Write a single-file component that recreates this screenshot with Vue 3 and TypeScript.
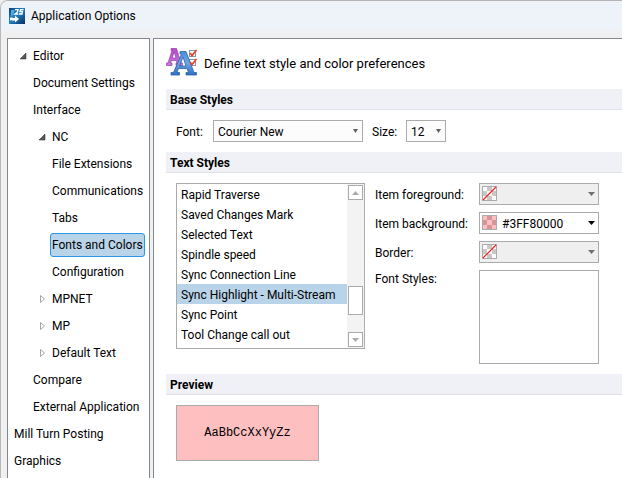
<script setup lang="ts">
import { ref } from 'vue'

interface TreeNode {
  label: string
  level: number
  state?: 'open' | 'closed'
}

const nodes: TreeNode[] = [
  { label: 'Editor', level: 1, state: 'open' },
  { label: 'Document Settings', level: 1 },
  { label: 'Interface', level: 1 },
  { label: 'NC', level: 2, state: 'open' },
  { label: 'File Extensions', level: 2 },
  { label: 'Communications', level: 2 },
  { label: 'Tabs', level: 2 },
  { label: 'Fonts and Colors', level: 2 },
  { label: 'Configuration', level: 2 },
  { label: 'MPNET', level: 2, state: 'closed' },
  { label: 'MP', level: 2, state: 'closed' },
  { label: 'Default Text', level: 2, state: 'closed' },
  { label: 'Compare', level: 1 },
  { label: 'External Application', level: 1 },
  { label: 'Mill Turn Posting', level: 0 },
  { label: 'Graphics', level: 0 },
]

const styleNames: string[] = [
  'Rapid Traverse',
  'Saved Changes Mark',
  'Selected Text',
  'Spindle speed',
  'Sync Connection Line',
  'Sync Highlight - Multi-Stream',
  'Sync Point',
  'Tool Change call out',
]

interface ColorField {
  id: string
  label: string
  value: string
}

const colorFields: ColorField[] = [
  { id: 'foreground', label: 'Item foreground:', value: '' },
  { id: 'background', label: 'Item background:', value: '#3FF80000' },
  { id: 'border', label: 'Border:', value: '' },
]

const page = ref('Fonts and Colors')
const textStyle = ref('Sync Highlight - Multi-Stream')
</script>

<template>
  <div class="window">
    <header class="titlebar">
      <svg class="app-icon" viewBox="0 0 16 16" aria-hidden="true">
        <defs>
          <linearGradient id="appBlue" x1="0" y1="0" x2="1" y2="1">
            <stop offset="0" stop-color="#12406f" />
            <stop offset="0.45" stop-color="#2384cc" />
            <stop offset="1" stop-color="#0a2c58" />
          </linearGradient>
        </defs>
        <rect width="16" height="16" fill="url(#appBlue)" />
        <path d="M2 2h4L4 7 2 9z" fill="#4ea9e2" />
        <path d="M6 1.700h3L8.500 4 6 6h3.300M14.500 1.700H11.500L11 3.500h2.500L13 6h-3" fill="none" stroke="#fff" stroke-width="1.300" />
        <path d="M1 9.500C3 9 4 10.500 6 10V7.500L10 11l-4 3.500V12.500C4 13 3 12 1 12.500z" fill="#fff" />
      </svg>
      <span>Application Options</span>
    </header>

    <div class="body">
      <nav class="tree" aria-label="Options">
        <ul>
          <li v-for="node in nodes" :key="node.label" :class="['node', `level-${node.level}`]">
            <svg v-if="node.state === 'open'" class="arrow" viewBox="0 0 8 8" aria-hidden="true">
              <path d="M7 1v6H1z" fill="#595959" stroke="#262626" stroke-width="0.500" />
            </svg>
            <svg v-else-if="node.state === 'closed'" class="arrow" viewBox="0 0 8 8" aria-hidden="true">
              <path d="M2.500 0.500v7L6.500 4z" fill="#fff" stroke="#a6a6a6" />
            </svg>
            <span v-else class="arrow"></span>
            <button
              type="button"
              :class="['node-label', { selected: node.label === page }]"
              @click="page = node.label"
            >{{ node.label }}</button>
          </li>
        </ul>
      </nav>

      <main class="content">
        <div class="intro">
          <svg class="intro-icon" viewBox="0 0 32 32" aria-hidden="true">
            <defs>
              <linearGradient id="letterBlue" x1="0" y1="0" x2="0" y2="1">
                <stop offset="0" stop-color="#4f8fd6" />
                <stop offset="0.5" stop-color="#6aa6e6" />
                <stop offset="1" stop-color="#2f6fc0" />
              </linearGradient>
              <linearGradient id="letterPurple" x1="0" y1="0" x2="0" y2="1">
                <stop offset="0" stop-color="#b04cc4" />
                <stop offset="1" stop-color="#cc78dc" />
              </linearGradient>
            </defs>
            <path
              d="M5 0.500h5.500L15 15h1.500v2.500H10V15h1l-0.600-2.500H5.500L4.500 15H6v2.500H0.500V15H2L6 2.500H5zM8.200 4 6.200 10H10z"
              fill="url(#letterPurple)"
              fill-rule="evenodd"
              stroke="#9a3bb0"
              stroke-width="0.700"
            />
            <g fill="#fff" stroke="#8496b4">
              <rect x="23.500" y="2.500" width="6" height="6" />
              <rect x="23.500" y="11.500" width="6" height="6" />
            </g>
            <path
              d="M14 3.500h6L28 24.500h2.500v2.500H20v-2.500h2.500L21 20.500h-8.500L11 24.500h2.500v2.500H5v-2.500h2.500L15.500 6H14zM17 9 13.500 18H20z"
              fill="url(#letterBlue)"
              fill-rule="evenodd"
              stroke="#2a62ac"
              stroke-width="0.800"
            />
            <path d="M24 5 26 7.500l4.500-5.500M24 14l2 2.500 4.500-5.500" fill="none" stroke="#ee4424" stroke-width="1.800" />
          </svg>
          <span class="intro-text">Define text style and color preferences</span>
        </div>

        <h2>Base Styles</h2>
        <div class="base-row">
          <label for="font">Font:</label>
          <div class="combo font-combo">
            <select id="font"><option>Courier New</option></select>
            <svg class="caret" viewBox="0 0 7 4" aria-hidden="true"><path d="M1 0h5L3.500 4z" /></svg>
          </div>
          <label for="size" class="size-label">Size:</label>
          <div class="combo size-combo">
            <select id="size"><option>12</option></select>
            <svg class="caret" viewBox="0 0 7 4" aria-hidden="true"><path d="M1 0h5L3.500 4z" /></svg>
          </div>
        </div>

        <h2>Text Styles</h2>
        <div class="styles-row">
          <div class="listbox">
            <ul role="listbox" aria-label="Text Styles">
              <li
                v-for="name in styleNames"
                :key="name"
                role="option"
                :aria-selected="name === textStyle"
                @click="textStyle = name"
              >{{ name }}</li>
            </ul>
            <div class="scrollbar">
              <button type="button" aria-label="Scroll up">
                <svg viewBox="0 0 7 4" aria-hidden="true"><path d="M0 4h7L3.500 0z" /></svg>
              </button>
              <div class="track"><div class="thumb"></div></div>
              <button type="button" aria-label="Scroll down">
                <svg viewBox="0 0 7 4" aria-hidden="true"><path d="M0 0h7L3.500 4z" /></svg>
              </button>
            </div>
          </div>

          <div class="fields">
            <template v-for="field in colorFields" :key="field.id">
              <label :for="field.id">{{ field.label }}</label>
              <div :class="['combo', 'color-combo', { disabled: !field.value }]">
                <select :id="field.id" :disabled="!field.value"><option>{{ field.value }}</option></select>
                <svg class="swatch" viewBox="0 0 15 15" aria-hidden="true">
                  <rect x="0.500" y="0.500" width="14" height="14" fill="#fff" stroke="#ababab" />
                  <path
                    d="M5 1h5v4H5zM1 5h4v5H1zM10 5h4v5h-4zM5 10h5v4H5z"
                    fill="#c8c8c8"
                  />
                  <rect v-if="field.value" x="1" y="1" width="13" height="13" fill="#f80000" fill-opacity="0.250" />
                  <path v-else d="M1 14 14 1" stroke="#f02020" stroke-width="1.200" />
                </svg>
                <svg class="caret" viewBox="0 0 7 4" aria-hidden="true"><path d="M0 0h7L3.500 4z" /></svg>
              </div>
            </template>
            <span id="font-styles" class="top-label">Font Styles:</span>
            <div class="font-styles" role="group" aria-labelledby="font-styles"></div>
          </div>
        </div>

        <h2>Preview</h2>
        <div class="preview">AaBbCcXxYyZz</div>
      </main>
    </div>
  </div>
</template>

<style>
body {
  margin: 0;
  background: #efefef;
}
</style>

<style scoped>
* {
  box-sizing: border-box;
}

.window {
  display: flex;
  flex-direction: column;
  height: 100vh;
  overflow: hidden;
  border-top: 1px solid #b4b4b4;
  border-left: 1px solid #b9b9b9;
  border-top-left-radius: 8px;
  background: #f0f0f0;
  color: #000;
  font: 12px/16px Roboto, "Open Sans", sans-serif;
}

.titlebar {
  display: flex;
  flex: none;
  align-items: center;
  gap: 6px;
  height: 30px;
  padding-left: 8px;
  background: #edf3f9;
}

.app-icon {
  width: 16px;
  height: 16px;
}

.body {
  display: flex;
  flex: 1;
  gap: 3px;
  min-height: 0;
  padding: 7px 0 0 6px;
}

.tree,
.content {
  border: 1px solid #828790;
  border-bottom: 0;
  background: #fff;
}

.tree {
  flex: none;
  width: 143px;
  padding-top: 3px;
  overflow: hidden;
}

ul {
  margin: 0;
  padding: 0;
  list-style: none;
}

.node {
  display: flex;
  align-items: center;
  height: 27px;
  white-space: nowrap;
}

.level-0 {
  padding-left: 4px;
}

.level-0 .arrow {
  display: none;
}

.level-1 {
  padding-left: 11px;
}

.level-2 {
  padding-left: 30px;
}

.arrow {
  flex: none;
  width: 8px;
  height: 8px;
  margin-right: 4px;
}

.node-label {
  height: 24px;
  padding: 0 1px;
  border: 1px solid transparent;
  border-radius: 3px;
  background: none;
  color: inherit;
  font: inherit;
}

.node-label.selected {
  border-color: #2a96e8;
  background: #b9d3e8;
}

.content {
  flex: 1;
  min-width: 0;
  padding-left: 12px;
  border-right: 0;
}

.intro {
  display: flex;
  align-items: center;
  gap: 6px;
  height: 50px;
}

.intro-icon {
  width: 32px;
  height: 32px;
}

.intro-text {
  font-size: 13px;
}

h2 {
  height: 21px;
  margin: 0;
  padding-left: 4px;
  border-bottom: 1px solid #e0e2e8;
  background: #f0f1f6;
  font-size: 12px;
  font-weight: 700;
  line-height: 22px;
}

.base-row {
  display: flex;
  align-items: center;
  height: 42px;
  padding-left: 10px;
}

label {
  padding-top: 2px;
}

.base-row label {
  width: 37px;
}

.base-row .size-label {
  width: 34px;
  margin-left: 9px;
}

.combo {
  position: relative;
  height: 22px;
}

.combo select {
  width: 100%;
  height: 100%;
  padding: 2px 4px 0;
  border: 1px solid #ababab;
  border-radius: 0;
  appearance: none;
  background: #fcfcfc;
  color: #000;
  font: inherit;
  opacity: 1;
}

.font-combo {
  width: 150px;
}

.size-combo {
  width: 40px;
}

.caret {
  position: absolute;
  top: 9px;
  right: 4px;
  width: 7px;
  height: 4px;
  fill: #606060;
  pointer-events: none;
}

.styles-row {
  display: flex;
  gap: 10px;
  height: 201px;
  padding: 10px 0 0 10px;
}

.listbox {
  display: flex;
  flex: none;
  width: 189px;
  height: 166px;
  border: 1px solid #ababab;
}

.listbox ul {
  flex: 1;
  white-space: nowrap;
}

.listbox li {
  height: 20px;
  padding-left: 4px;
  line-height: 22px;
}

.listbox li[aria-selected="true"] {
  background: #b9d3e8;
}

.scrollbar {
  display: flex;
  flex: none;
  flex-direction: column;
  width: 17px;
  padding: 1px;
  background: #f3f3f3;
}

.scrollbar button {
  display: flex;
  align-items: center;
  justify-content: center;
  width: 15px;
  height: 15px;
  padding: 0;
  border: 1px solid #ababab;
  background: #fff;
}

.scrollbar svg {
  width: 7px;
  height: 4px;
  fill: #ababab;
}

.track {
  display: flex;
  flex: 1;
  flex-direction: column;
  justify-content: flex-end;
  padding-bottom: 17px;
}

.thumb {
  height: 29px;
  border: 1px solid #ababab;
  background: #fff;
}

.fields {
  display: grid;
  grid-template-columns: 104px 120px;
  grid-template-rows: 22px 22px 22px 94px;
  row-gap: 7px;
  align-items: center;
  white-space: nowrap;
}

.color-combo select {
  padding-left: 22px;
  background: #fff;
}

.color-combo.disabled select {
  background: #efefef;
}

.color-combo .caret {
  fill: #000;
}

.color-combo.disabled .caret {
  fill: #707070;
}

.swatch {
  position: absolute;
  top: 3px;
  left: 3px;
  width: 15px;
  height: 15px;
  pointer-events: none;
}

.top-label {
  align-self: start;
  padding-top: 1px;
}

.font-styles {
  height: 94px;
  border: 1px solid #ababab;
}

.preview {
  display: flex;
  align-items: center;
  justify-content: center;
  width: 143px;
  height: 56px;
  margin: 10px 0 0 10px;
  border: 1px solid #ababab;
  background: #fdbfbf;
  font-family: "Liberation Mono", monospace;
}
</style>
